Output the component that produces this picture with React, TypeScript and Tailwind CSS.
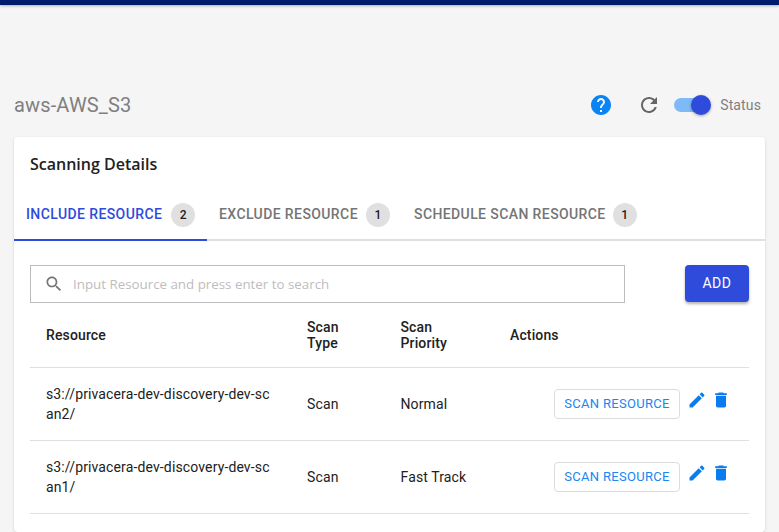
import { useState } from 'react';

const rows = [
  { resource: 's3://privacera-dev-discovery-dev-scan2/', type: 'Scan', priority: 'Normal' },
  { resource: 's3://privacera-dev-discovery-dev-scan1/', type: 'Scan', priority: 'Fast Track' },
];

const tabs = [
  { label: 'INCLUDE RESOURCE', count: 2, width: 'w-[193px]', badgeGap: 'ml-[9px]' },
  { label: 'EXCLUDE RESOURCE', count: 1, width: 'w-[195px]', badgeGap: 'ml-[8px]' },
  { label: 'SCHEDULE SCAN RESOURCE', count: 1, width: 'w-[240px]', badgeGap: 'ml-[7px]' },
];

function Icon({ d, className }: { d: string; className: string }) {
  return (
    <svg viewBox="0 0 24 24" fill="currentColor" className={className}>
      <path d={d} />
    </svg>
  );
}

const helpPath =
  'M12 2C6.48 2 2 6.48 2 12s4.48 10 10 10 10-4.48 10-10S17.52 2 12 2zm1 17h-2v-2h2v2zm2.07-7.75l-.9.92C13.45 12.9 13 13.5 13 15h-2v-.5c0-1.1.45-2.1 1.17-2.83l1.24-1.26c.37-.36.59-.86.59-1.41 0-1.1-.9-2-2-2s-2 .9-2 2H8c0-2.21 1.79-4 4-4s4 1.79 4 4c0 .88-.36 1.68-.93 2.25z';
const refreshPath =
  'M17.65 6.35C16.2 4.9 14.21 4 12 4c-4.42 0-7.99 3.58-7.99 8s3.57 8 7.99 8c3.73 0 6.84-2.55 7.73-6h-2.08c-.82 2.33-3.04 4-5.65 4-3.31 0-6-2.69-6-6s2.69-6 6-6c1.66 0 3.14.69 4.22 1.78L13 11h7V4l-2.35 2.35z';
const editPath =
  'M3 17.25V21h3.75L17.81 9.94l-3.75-3.75L3 17.25zM20.71 7.04c.39-.39.39-1.02 0-1.41l-2.34-2.34c-.39-.39-1.02-.39-1.41 0l-1.83 1.83 3.75 3.75 1.83-1.83z';
const deletePath =
  'M6 19c0 1.1.9 2 2 2h8c1.1 0 2-.9 2-2V7H6v12zM19 4h-3.5l-1-1h-5l-1 1H5v2h14V4z';
const searchPath =
  'M15.5 14h-.79l-.28-.27C15.41 12.59 16 11.11 16 9.5 16 5.91 13.09 3 9.5 3S3 5.91 3 9.5 5.91 16 9.5 16c1.61 0 3.09-.59 4.23-1.57l.27.28v.79l5 4.99L20.49 19l-4.99-5zm-6 0C7.01 14 5 11.99 5 9.5S7.01 5 9.5 5 14 7.01 14 9.5 11.99 14 9.5 14z';

export default function App() {
  const [query, setQuery] = useState('');

  return (
    <div className="flex h-[532px] w-[779px] flex-col overflow-hidden bg-[#f5f5f5] font-['Roboto',sans-serif] text-[14px] tracking-[0.13px] text-[#212121]">
      <div className="h-[5px] shrink-0 bg-[#001a6e] shadow-[0_1px_3px_rgba(0,0,0,0.3)]" />

      {/* page header */}
      <div className="mt-[80px] flex h-[40px] shrink-0 items-center pl-[14px] pr-[18px]">
        <h1 className="text-[20px] font-normal tracking-[0.15px] text-[#7f7f7f]">aws-AWS_S3</h1>
        <Icon d={helpPath} className="ml-auto size-[24px] text-[#0a84f5]" />
        <Icon d={refreshPath} className="ml-[24px] size-[24px] text-[#666666]" />
        <div className="relative ml-[13px] h-[14px] w-[34px] rounded-full bg-[#7dbaf7]">
          <span className="absolute right-[-3px] top-[-3px] size-[20px] rounded-full bg-[#2f4bdc] shadow-[0_1px_3px_rgba(0,0,0,0.35)]" />
        </div>
        <span className="ml-[12px] text-[14px] text-[#808080]">Status</span>
      </div>

      {/* card */}
      <div className="mx-[14px] mt-[12px] flex-1 rounded-[4px] bg-white shadow-[0_1px_3px_rgba(0,0,0,0.15)]">
        <div className="px-[16px] pt-[16px] font-['Open_Sans',sans-serif] text-[16px] font-semibold leading-[22px] tracking-normal text-[#212121]">
          Scanning Details
        </div>

        <div className="mt-[15px] flex h-[51px] border-b-2 border-[#e0e0e0]">
          {tabs.map((tab, i) => (
            <div
              key={tab.label}
              className={`${tab.width} -mb-[2px] flex items-center border-b-2 pl-[12px] ${i === 0 ? 'border-[#2f4bdc] text-[#2f4bdc]' : 'border-transparent text-[#757575]'}`}
            >
              <span className="-mt-[1px] text-[14px] font-medium tracking-[0.4px]">{tab.label}</span>
              <span className={`${tab.badgeGap} flex size-[24px] items-center justify-center rounded-full bg-[#e0e0e0] text-[12px] font-medium text-[#212121]`}>
                {tab.count}
              </span>
            </div>
          ))}
        </div>

        <div className="px-[16px]">
          <div className="mt-[24px] flex items-start justify-between">
            <label className="flex h-[38px] w-[595px] items-center border border-[#bdbdbd] pl-[13px]">
              <Icon d={searchPath} className="size-[20px] shrink-0 text-[#757575]" />
              <input
                value={query}
                onChange={(e) => setQuery(e.target.value)}
                placeholder="Input Resource and press enter to search"
                className="ml-[9px] flex-1 bg-transparent pt-[2px] font-['Open_Sans',sans-serif] text-[13.33px] tracking-normal outline-none placeholder:text-[#bdbdbd]"
              />
            </label>
            <button className="h-[37px] w-[64px] rounded-[4px] bg-[#2f4bdc] text-[14px] font-normal tracking-[0.5px] text-white shadow-[0_2px_3px_rgba(0,0,0,0.3)]">
              ADD
            </button>
          </div>

          <table className="w-full table-fixed border-collapse">
            <colgroup>
              <col className="w-[261px]" />
              <col className="w-[93.5px]" />
              <col className="w-[109.5px]" />
              <col />
            </colgroup>
            <thead>
              <tr className="h-[64px] border-b border-[#e0e0e0] text-left text-[14px] leading-[16px]">
                <th className="pl-[16px] font-medium">Resource</th>
                <th className="pl-[16px] pr-[30px] font-medium">Scan Type</th>
                <th className="pl-[16px] pr-[30px] font-medium">Scan Priority</th>
                <th className="pl-[16px] font-medium">Actions</th>
              </tr>
            </thead>
            <tbody>
              {rows.map((row) => (
                <tr key={row.resource} className="h-[73px] border-b border-[#e0e0e0] leading-[20px]">
                  <td className="break-all pl-[16px] pr-[16px]">{row.resource}</td>
                  <td className="pl-[16px]">{row.type}</td>
                  <td className="pl-[16px]">{row.priority}</td>
                  <td>
                    <div className="flex items-center justify-end pr-[18px]">
                      <button className="h-[30px] w-[126px] rounded-[4px] border border-[#dcdcdc] text-[13px] tracking-[0.3px] text-[#1a86f0]">
                        SCAN RESOURCE
                      </button>
                      <Icon d={editPath} className="-mt-[7px] ml-[7px] size-[20px] text-[#0a7cf0]" />
                      <Icon d={deletePath} className="-mt-[7px] ml-[4px] size-[20px] text-[#0a7cf0]" />
                    </div>
                  </td>
                </tr>
              ))}
            </tbody>
          </table>
        </div>
      </div>
    </div>
  );
}
